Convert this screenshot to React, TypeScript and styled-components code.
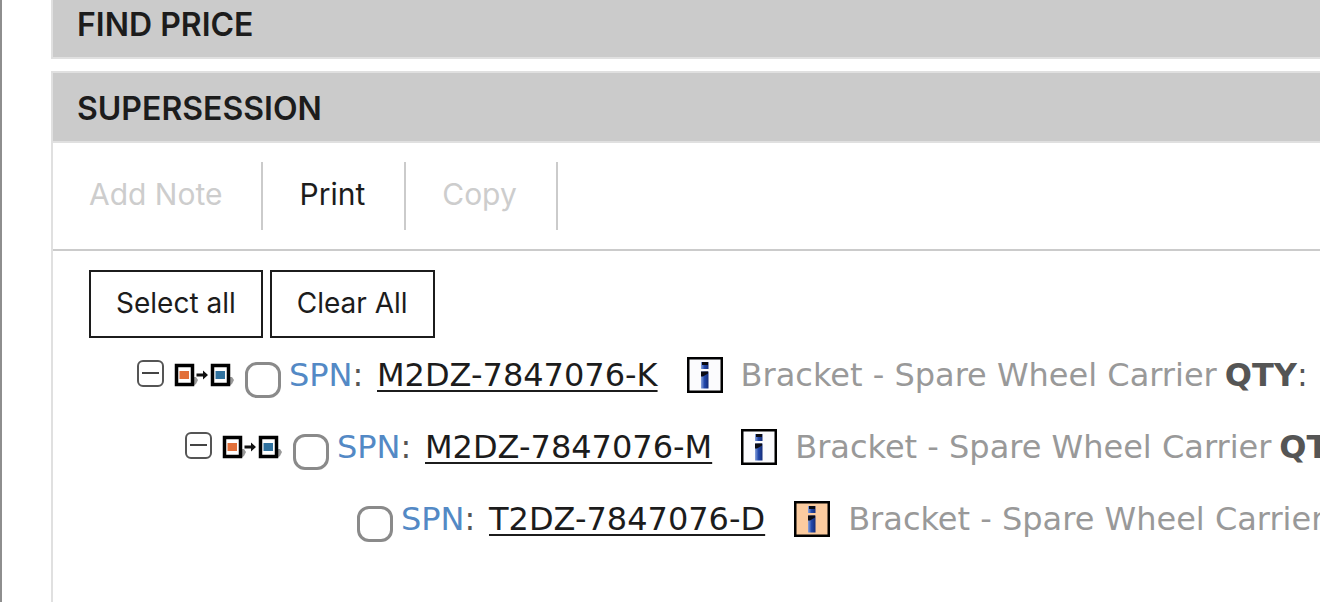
import React from "react";
import styled, { createGlobalStyle } from "styled-components";

const GlobalStyle = createGlobalStyle`
  *, *::before, *::after { box-sizing: border-box; }
  html, body { margin: 0; background: #fff; overflow: hidden; }
`;

const uiFont = `"Inter", "Open Sans", sans-serif`;
const dataFont = `"DejaVu Sans", Verdana, sans-serif`;

const Page = styled.main`
  min-height: 100vh;
  border-left: 2px solid #8e8e8e;
  padding-left: 49px;
  overflow: hidden;
  display: flex;
  flex-direction: column;
  gap: 12px;
  font-family: ${uiFont};
  color: #1c1c1c;
`;

const Panel = styled.section<{ $clipped?: boolean; $fill?: boolean }>`
  border-left: 2px solid #e0e0e0;
  margin-top: ${(p) => (p.$clipped ? "-13px" : "0")};
  flex: ${(p) => (p.$fill ? "1" : "none")};
`;

const PanelTitle = styled.h2`
  margin: 0;
  padding: 3px 24px 0;
  height: 72px;
  display: flex;
  align-items: center;
  background: #cbcbcb;
  border-top: 2px solid #e0e0e0;
  border-bottom: 2px solid #e0e0e0;
  font-size: 32px;
  font-weight: 600;
  line-height: 36px;
`;

const Toolbar = styled.div`
  display: flex;
  align-items: center;
  height: 108px;
  border-bottom: 2px solid #cbcbcb;
`;

const ToolbarButton = styled.button`
  height: 68px;
  padding: 0 39px 4px 36px;
  border: 0;
  border-right: 2px solid #cbcbcb;
  background: none;
  font: 400 30px/36px ${uiFont};
  color: #1c1c1c;
  &:disabled { color: #cdcdcd; }
`;

const Actions = styled.div`
  display: flex;
  gap: 7px;
  padding: 19px 36px 0;
`;

const ActionButton = styled.button`
  height: 68px;
  padding: 0 25px 2px;
  border: 2px solid #1c1c1c;
  border-radius: 0;
  background: #fff;
  color: #1c1c1c;
  font: 400 28px/32px ${uiFont};
`;

const Tree = styled.ul`
  list-style: none;
  margin: 0;
  padding: 1px 0 0;
`;

const Row = styled.li<{ $indent: number }>`
  display: flex;
  align-items: center;
  height: 72px;
  padding-left: ${(p) => p.$indent}px;
  white-space: nowrap;
  font-family: ${dataFont};
  font-size: 32px;
  line-height: 40px;
  color: #555;
`;

const Toggle = styled.button`
  flex: none;
  width: 27px;
  height: 27px;
  margin: 0 10px 4px 0;
  padding: 0;
  border: 2px solid #555;
  border-radius: 6px;
  background: #fff;
  display: flex;
  align-items: center;
  justify-content: center;
  &::before {
    content: "";
    width: 17px;
    height: 2px;
    background: #444;
  }
`;

const Checkbox = styled.input`
  appearance: none;
  flex: none;
  width: 36px;
  height: 36px;
  margin: 10px 8px 0 0;
  border: 3px solid #8a8a8a;
  border-radius: 12px;
  background: #fff;
`;

const SwapSvg = styled.svg`
  flex: none;
  width: 61px;
  height: 24px;
  margin-right: 10px;
`;

const Label = styled.label`
  flex: none;
  width: 88px;
`;

const Spn = styled.span`
  color: #5389c5;
`;

const PartLink = styled.a`
  color: #1c1c1c;
  text-decoration: underline;
  text-decoration-thickness: 2px;
  text-underline-offset: 4px;
`;

const InfoButton = styled.button`
  flex: none;
  width: 36px;
  height: 36px;
  margin: 0 18px 0 29px;
  padding: 0;
  border: 0;
  background: none;
  svg { display: block; }
`;

const Description = styled.span`
  color: #999;
  margin-right: 8px;
`;

function SwapIcon() {
  return (
    <SwapSvg viewBox="0 0 61 24" aria-hidden="true">
      <path d="M19 14h3l2 3-2 4-3 2h-2zM55 14h3l2 3-2 4-3 2h-2z" fill="#999" />
      <rect x="2.5" y="2.5" width="16" height="19" fill="#fff" stroke="#000" strokeWidth="3.5" />
      <rect x="5.5" y="8" width="9.5" height="8" fill="#e2703a" />
      <rect x="38.5" y="2.5" width="16" height="19" fill="#fff" stroke="#000" strokeWidth="3.5" />
      <rect x="41.5" y="8" width="9.5" height="8" fill="#30729f" />
      <path d="M22.5 10.5H29V7.5l5 4.5-5 4.5v-3h-6.5z" fill="#111" />
    </SwapSvg>
  );
}

function InfoIcon({ id, fill }: { id: string; fill: string }) {
  return (
    <svg width="36" height="36" viewBox="0 0 36 36" aria-hidden="true">
      <defs>
        <linearGradient id={id} x1="0" x2="1" y1="0" y2="0">
          <stop offset="0" stopColor="#8ba4dc" />
          <stop offset="0.45" stopColor="#2349ac" />
          <stop offset="1" stopColor="#142c78" />
        </linearGradient>
      </defs>
      <rect x="1.25" y="1.25" width="33.5" height="33.5" fill={fill} stroke="#000" strokeWidth="2.5" />
      <rect x="14" y="5" width="7.5" height="7" fill={`url(#${id})`} />
      <rect x="14" y="14.5" width="7.5" height="17" fill={`url(#${id})`} />
      <path d="M15 5h6v3h-6zM14 14.5h7v2l-5 3h-2z" fill="#0b0b12" />
    </svg>
  );
}

type Part = { number: string; indent: number; branch: boolean; infoFill: string };

const parts: Part[] = [
  { number: "M2DZ-7847076-K", indent: 84, branch: true, infoFill: "#fbfbfd" },
  { number: "M2DZ-7847076-M", indent: 132, branch: true, infoFill: "#fbfbfd" },
  { number: "T2DZ-7847076-D", indent: 304, branch: false, infoFill: "#fbcb9f" },
];

export default function App() {
  return (
    <>
      <GlobalStyle />
      <Page>
        <Panel $clipped>
          <PanelTitle>FIND PRICE</PanelTitle>
        </Panel>
        <Panel $fill>
          <PanelTitle>SUPERSESSION</PanelTitle>
          <Toolbar>
            <ToolbarButton disabled>Add Note</ToolbarButton>
            <ToolbarButton>Print</ToolbarButton>
            <ToolbarButton disabled>Copy</ToolbarButton>
          </Toolbar>
          <Actions>
            <ActionButton>Select all</ActionButton>
            <ActionButton>Clear All</ActionButton>
          </Actions>
          <Tree>
            {parts.map((part) => (
              <Row key={part.number} $indent={part.indent}>
                {part.branch && (
                  <>
                    <Toggle aria-label={`Collapse ${part.number}`} />
                    <SwapIcon />
                  </>
                )}
                <Checkbox type="checkbox" id={part.number} />
                <Label htmlFor={part.number}>
                  <Spn>SPN</Spn>:
                </Label>
                <PartLink href="#">{part.number}</PartLink>
                <InfoButton aria-label={`About ${part.number}`}>
                  <InfoIcon id={`info-${part.number}`} fill={part.infoFill} />
                </InfoButton>
                <Description>Bracket - Spare Wheel Carrier</Description>
                <b>QTY</b>:
              </Row>
            ))}
          </Tree>
        </Panel>
      </Page>
    </>
  );
}
